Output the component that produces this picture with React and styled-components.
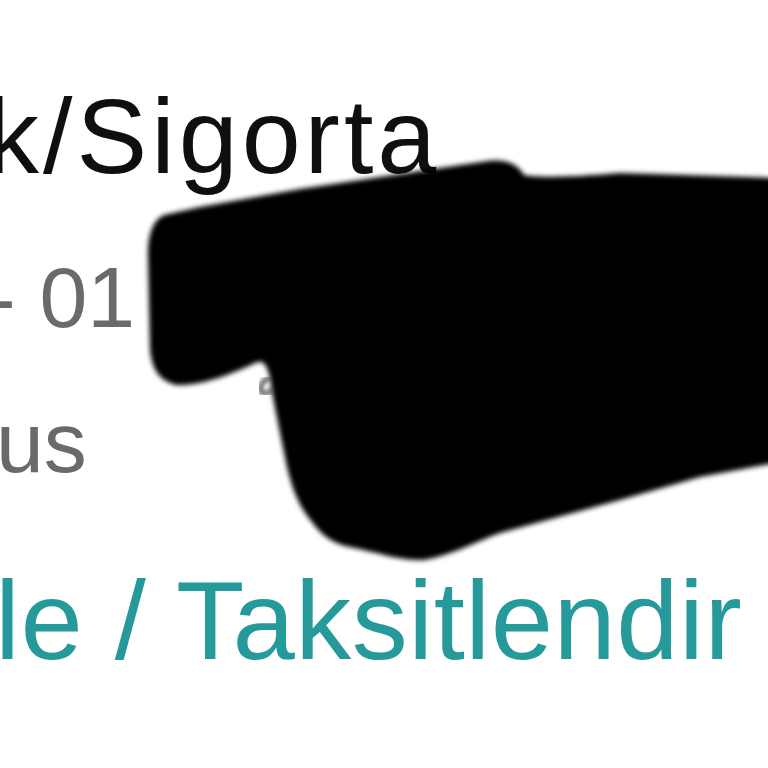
import React from 'react';
import styled, { createGlobalStyle } from 'styled-components';

const GlobalStyle = createGlobalStyle`
html, body {
  margin: 0;
  padding: 0;
  background: #ffffff;
}
body {
  font-family: "Liberation Sans", Arial, sans-serif;
}
`;

const Page = styled.div`
position: relative;
width: 768px;
height: 768px;
overflow: hidden;
background: #ffffff;
`;

const Details = styled.div`
display: flex;
flex-direction: column;
padding-top: 83px;
`;

const Line = styled.div`
font-size: ${p => p.size}px;
line-height: 1;
height: ${p => p.size}px;
color: ${p => p.color};
margin-left: ${p => p.indent}px;
margin-bottom: ${p => p.gap || 0}px;
white-space: nowrap;
letter-spacing: ${p => p.spacing || 0}px;
`;

const Redaction = styled.svg`
position: absolute;
left: 0;
top: 0;
width: 768px;
height: 768px;
pointer-events: none;
`;

function Scribble() {
    return (
        <Redaction viewBox="0 0 768 768">
            <defs>
                <filter id="soft" x="-5%" y="-5%" width="110%" height="110%">
                    <feGaussianBlur stdDeviation="2.6" />
                </filter>
            </defs>
            <path
                filter="url(#soft)"
                fill="#000"
                d="M164 215 C150 222 148 240 148 256 L150 350 C152 368 158 380 176 385
                   C205 386 235 372 258 362 C266 360 270 372 272 392
                   L280 433 L287 467 C293 492 300 508 312 522 C322 536 334 544 350 547
                   C380 553 400 561 424 560 C450 556 475 542 500 533
                   L620 500 L700 477 L780 462 L780 178 L620 173
                   C600 175 540 179 524 175 C518 165 508 159 488 161
                   L420 171 L300 189 L200 207 Z"
            />
            <path
                filter="url(#soft)"
                fill="none"
                stroke="#000"
                strokeWidth="3"
                d="M270 378 C262 380 258 388 262 393 C266 395 270 392 272 389"
            />
        </Redaction>
    );
}

export default function App() {
    return (
        <Page>
            <GlobalStyle />
            <Details>
                <Line size={106} color="#0f0f0f" indent={-14} spacing={4} gap={65}>k/Sigorta</Line>
                <Line size={86} color="#6a6a6a" indent={-13} gap={59}>- 01</Line>
                <Line size={86} color="#6a6a6a" indent={-4} gap={80}>us</Line>
                <Line size={112} color="#26999b" indent={-5} spacing={0.5}>le / Taksitlendir</Line>
            </Details>
            <Scribble />
        </Page>
    );
}
